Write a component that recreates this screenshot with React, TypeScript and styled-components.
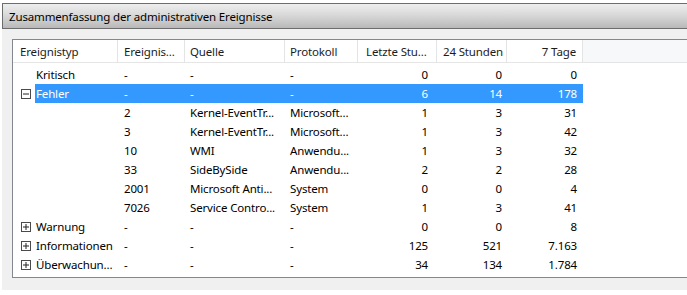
import styled, { createGlobalStyle } from "styled-components";

const GlobalStyle = createGlobalStyle`
  html, body {
    margin: 0;
    padding: 0;
    background: #ffffff;
  }
  body {
    font-family: "Noto Sans", "Open Sans", sans-serif;
    font-size: 11.5px;
    letter-spacing: -0.15px;
    color: #000000;
  }
`;

const COLS = "105px 67px 100px 73px 79px 70px 76px 1fr";

const Page = styled.div`
  width: 687px;
  height: 295px;
  overflow: hidden;
  padding-top: 3px;
  box-sizing: border-box;
  display: flex;
  flex-direction: column;
`;

const TitleBar = styled.div`
  margin-left: 2px;
  height: 24px;
  border: 1px solid #6d6d6d;
  border-right: none;
  background: linear-gradient(#eeeeee, #d9d9d9 45%, #b9b9b9);
  display: flex;
  align-items: center;
  padding-left: 6px;
  color: #000;
  white-space: nowrap;
`;

const Body = styled.div`
  margin-left: 2px;
  background: #f0f0f0;
  padding: 10px 0 12px 10px;
  display: flex;
`;

const Panel = styled.div`
  flex: 1;
  border: 1px solid #828790;
  border-right: none;
  background: #ffffff;
  padding-bottom: 3px;
`;

const HeaderRow = styled.div`
  display: grid;
  grid-template-columns: ${COLS};
  height: 22px;
  border-bottom: 1px solid #e5e5e5;
  margin-bottom: 2px;
`;

const HeaderCell = styled.div<{ $right?: boolean; $filler?: boolean; $pl?: number; $pr?: number }>`
  display: flex;
  align-items: center;
  justify-content: ${(p) => (p.$right ? "flex-end" : "flex-start")};
  padding-left: ${(p) => p.$pl ?? 5}px;
  padding-right: ${(p) => p.$pr ?? 5}px;
  border-right: ${(p) => (p.$filler ? "none" : "1px solid #e3e4e6")};
  background: ${(p) => (p.$filler ? "#f7f8fa" : "#ffffff")};
  color: #1c1c1c;
  white-space: nowrap;
  overflow: hidden;
`;

const Row = styled.div`
  display: grid;
  grid-template-columns: ${COLS};
  height: 19px;
`;

const TypeCell = styled.div`
  display: flex;
  align-items: stretch;
  padding-left: 8px;
`;

const ExpanderSlot = styled.div`
  width: 14px;
  display: flex;
  align-items: center;
`;

const Label = styled.div<{ $selected?: boolean }>`
  flex: 1;
  display: flex;
  align-items: center;
  padding-left: 1px;
  white-space: nowrap;
  overflow: hidden;
  background: ${(p) => (p.$selected ? "#3399ff" : "transparent")};
  color: ${(p) => (p.$selected ? "#ffffff" : "#000000")};
`;

const Cell = styled.div<{ $right?: boolean; $selected?: boolean; $pl?: number; $pr?: number }>`
  display: flex;
  align-items: center;
  justify-content: ${(p) => (p.$right ? "flex-end" : "flex-start")};
  padding-left: ${(p) => p.$pl ?? 5}px;
  padding-right: ${(p) => p.$pr ?? 5}px;
  white-space: nowrap;
  overflow: hidden;
  background: ${(p) => (p.$selected ? "#3399ff" : "transparent")};
  color: ${(p) => (p.$selected ? "#ffffff" : "#000000")};
`;

const Expander = ({ open }: { open: boolean }) => (
  <svg width="10" height="10" viewBox="0 0 10 10" style={{ display: "block" }}>
    <rect x="0.5" y="0.5" width="9" height="9" fill="#ffffff" stroke="#4a4a4a" />
    <line x1="2" y1="5" x2="8" y2="5" stroke="#222222" />
    {!open && <line x1="5" y1="2" x2="5" y2="8" stroke="#222222" />}
  </svg>
);

type Entry = {
  type?: string;
  expander?: "open" | "closed";
  selected?: boolean;
  id: string;
  source: string;
  log: string;
  hour: string;
  day: string;
  week: string;
};

const rows: Entry[] = [
  { type: "Kritisch", id: "-", source: "-", log: "-", hour: "0", day: "0", week: "0" },
  { type: "Fehler", expander: "open", selected: true, id: "-", source: "-", log: "-", hour: "6", day: "14", week: "178" },
  { id: "2", source: "Kernel-EventTr...", log: "Microsoft...", hour: "1", day: "3", week: "31" },
  { id: "3", source: "Kernel-EventTr...", log: "Microsoft...", hour: "1", day: "3", week: "42" },
  { id: "10", source: "WMI", log: "Anwendu...", hour: "1", day: "3", week: "32" },
  { id: "33", source: "SideBySide", log: "Anwendu...", hour: "2", day: "2", week: "28" },
  { id: "2001", source: "Microsoft Anti...", log: "System", hour: "0", day: "0", week: "4" },
  { id: "7026", source: "Service Contro...", log: "System", hour: "1", day: "3", week: "41" },
  { type: "Warnung", expander: "closed", id: "-", source: "-", log: "-", hour: "0", day: "0", week: "8" },
  { type: "Informationen", expander: "closed", id: "-", source: "-", log: "-", hour: "125", day: "521", week: "7.163" },
  { type: "Überwachun...", expander: "closed", id: "-", source: "-", log: "-", hour: "34", day: "134", week: "1.784" },
];

export default function App() {
  return (
    <>
      <GlobalStyle />
      <Page>
        <TitleBar>Zusammenfassung der administrativen Ereignisse</TitleBar>
        <Body>
          <Panel>
            <HeaderRow>
              <HeaderCell $pl={7}>Ereignistyp</HeaderCell>
              <HeaderCell $pl={6}>Ereignis...</HeaderCell>
              <HeaderCell>Quelle</HeaderCell>
              <HeaderCell>Protokoll</HeaderCell>
              <HeaderCell $pl={8}>Letzte Stu...</HeaderCell>
              <HeaderCell $pl={6}>24 Stunden</HeaderCell>
              <HeaderCell $right $pr={6}>7 Tage</HeaderCell>
              <HeaderCell $filler />
            </HeaderRow>
            {rows.map((r, i) => (
              <Row key={i}>
                <TypeCell>
                  <ExpanderSlot>{r.expander && <Expander open={r.expander === "open"} />}</ExpanderSlot>
                  {r.type !== undefined && <Label $selected={r.selected}>{r.type}</Label>}
                </TypeCell>
                <Cell $selected={r.selected} $pl={6}>{r.id}</Cell>
                <Cell $selected={r.selected}>{r.source}</Cell>
                <Cell $selected={r.selected}>{r.log}</Cell>
                <Cell $selected={r.selected} $right $pr={9}>{r.hour}</Cell>
                <Cell $selected={r.selected} $right $pr={5}>{r.day}</Cell>
                <Cell $selected={r.selected} $right $pr={6}>{r.week}</Cell>
                <Cell />
              </Row>
            ))}
          </Panel>
        </Body>
      </Page>
    </>
  );
}
